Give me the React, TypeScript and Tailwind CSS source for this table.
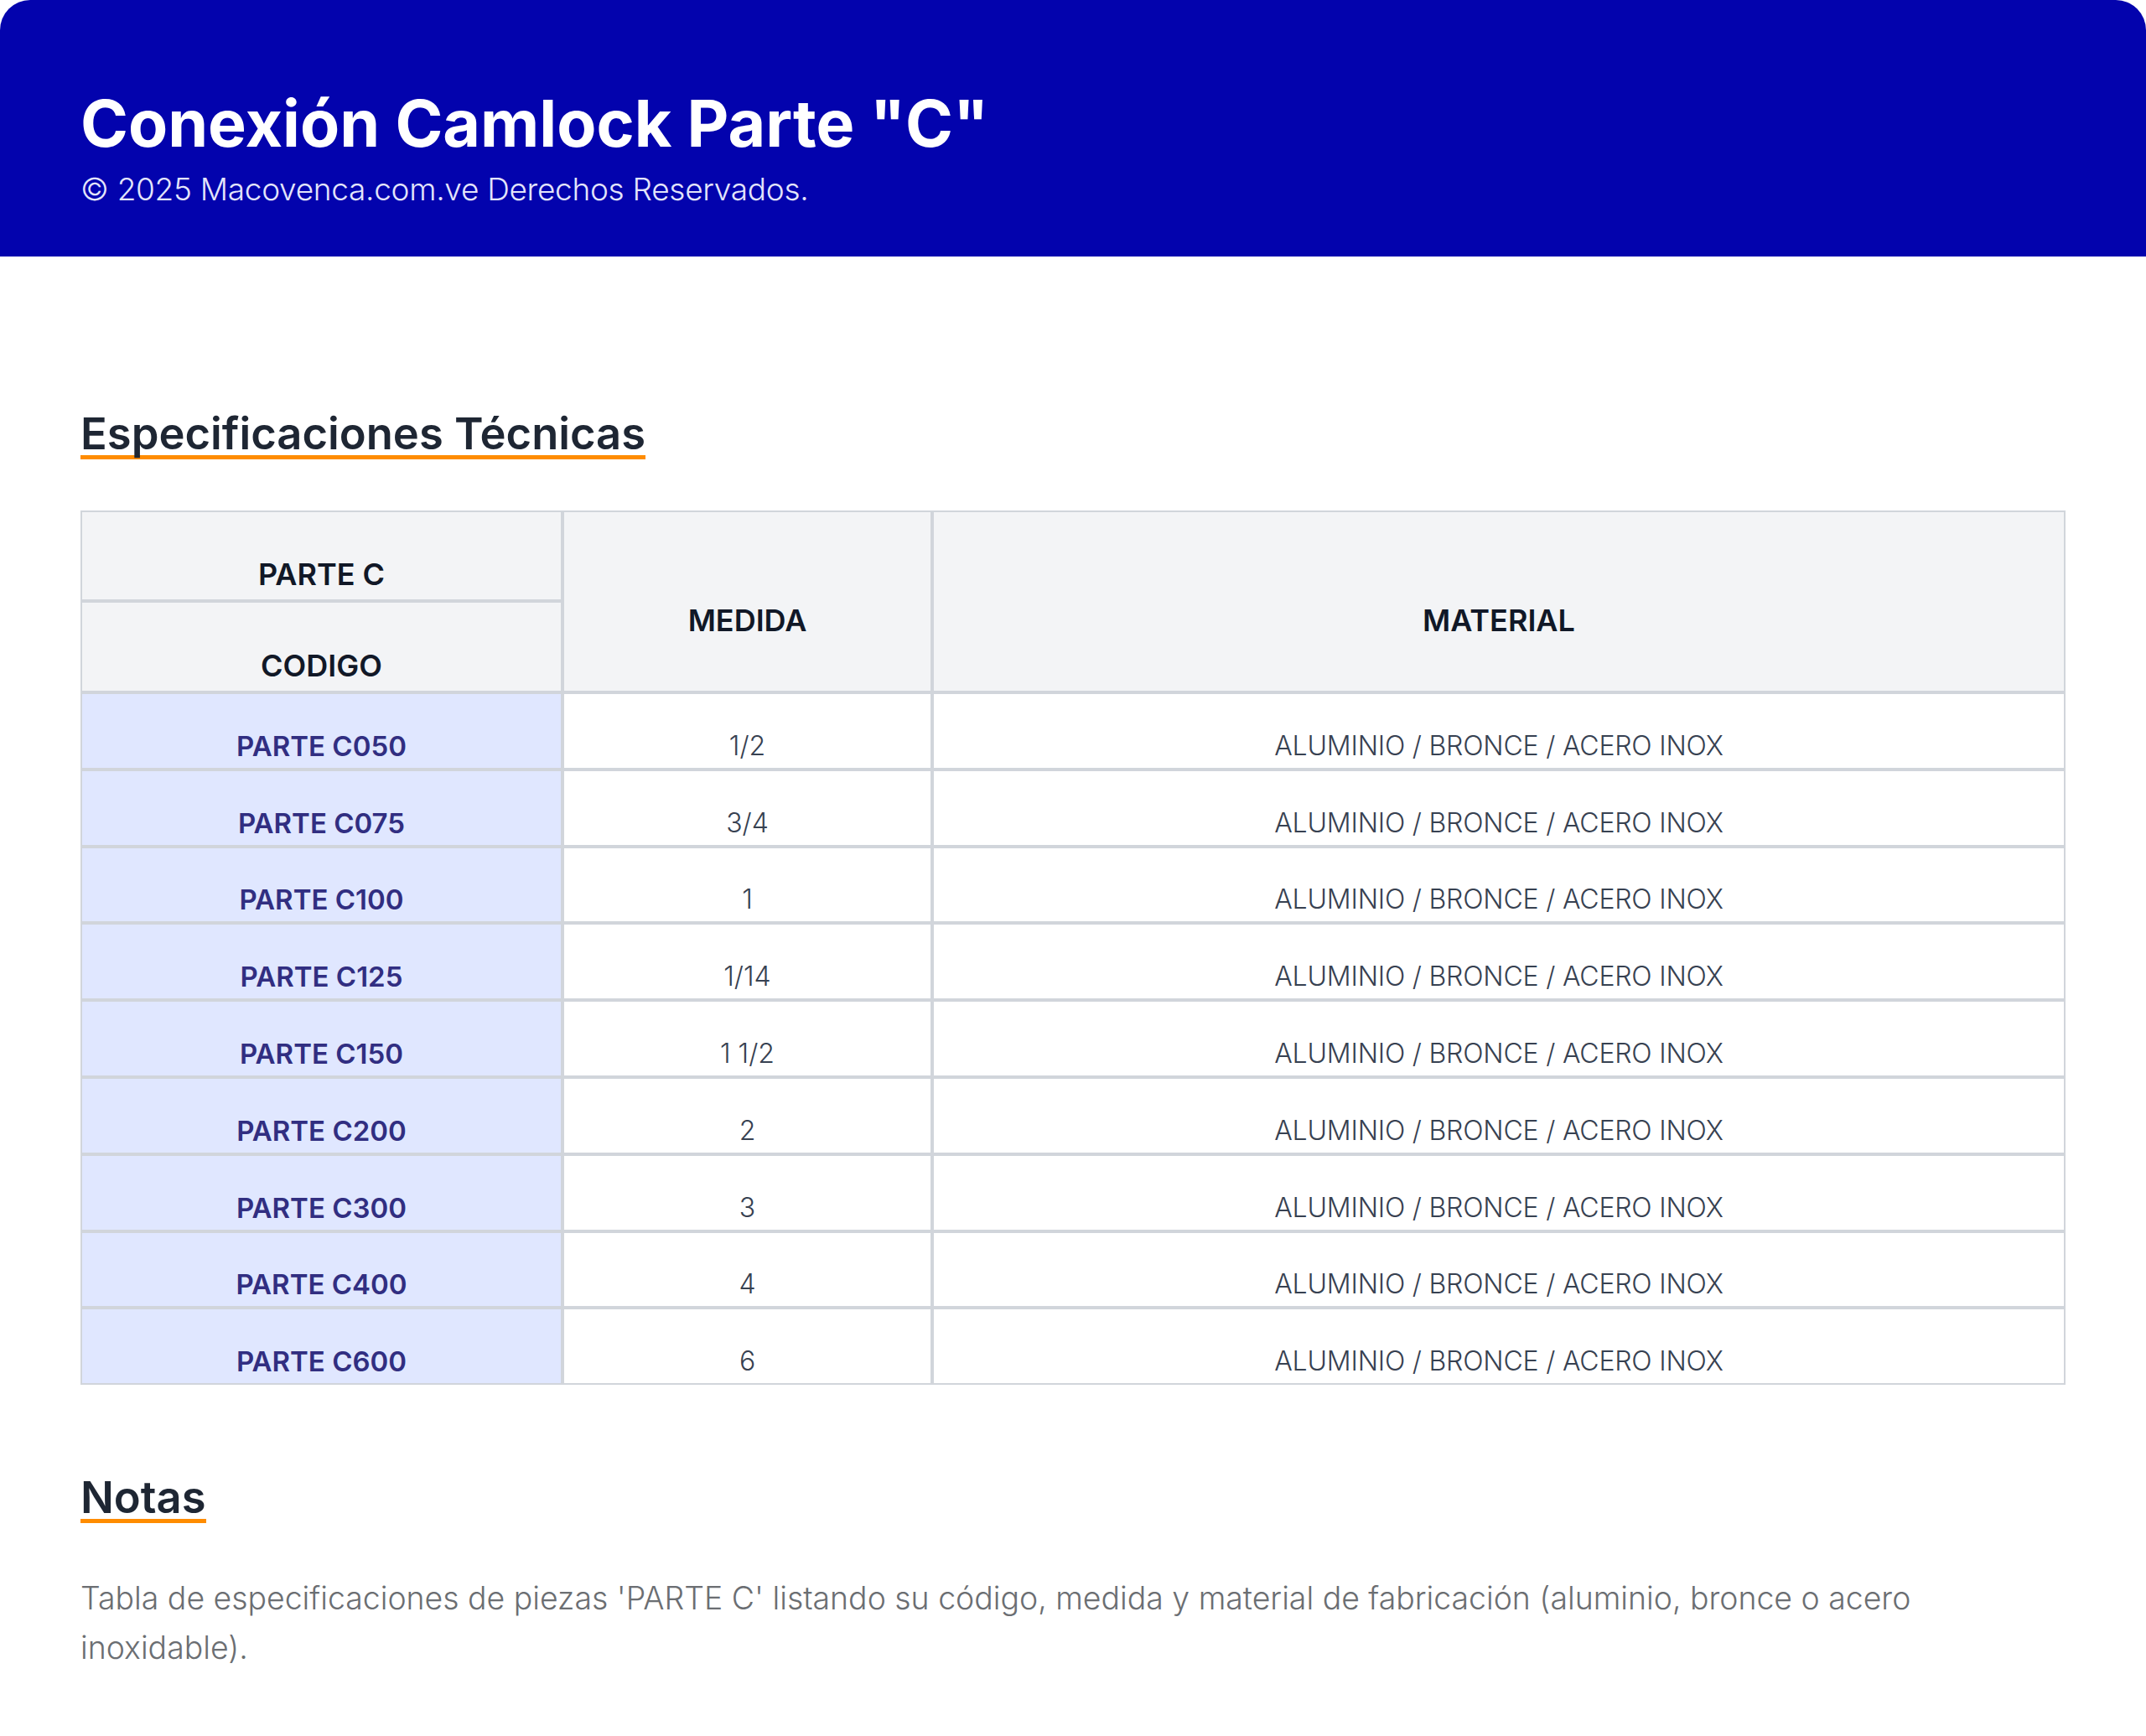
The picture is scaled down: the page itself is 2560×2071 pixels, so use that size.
const rows = [
  { code: 'PARTE C050', size: '1/2' },
  { code: 'PARTE C075', size: '3/4' },
  { code: 'PARTE C100', size: '1' },
  { code: 'PARTE C125', size: '1/14' },
  { code: 'PARTE C150', size: '1 1/2' },
  { code: 'PARTE C200', size: '2' },
  { code: 'PARTE C300', size: '3' },
  { code: 'PARTE C400', size: '4' },
  { code: 'PARTE C600', size: '6' },
];

const MATERIAL = 'ALUMINIO / BRONCE / ACERO INOX';

export default function App() {
  return (
    <div className="min-h-[2071px] bg-white font-['Inter',sans-serif]">
      {/* cabecera */}
      <header className="bg-[#0303ad] rounded-t-[36px] px-24 pt-[109px] pb-[58px]">
        <h1 className="text-[77px] leading-none font-bold text-white">
          Conexión Camlock Parte "C"
        </h1>
        <p className="mt-[18px] text-[37px] leading-[44px] font-light text-[#e3e5fb] tracking-[-0.3px]">
          © 2025 Macovenca.com.ve Derechos Reservados.
        </p>
      </header>

      <main className="px-24 pb-[79px]">
        <h2 className="mt-[185px] inline-block text-[52.5px] leading-[52px] font-semibold text-[#1e2633] border-b-[5px] border-[#ff8c00]">
          Especificaciones Técnicas
        </h2>

        <table className="mt-[61px] w-full table-fixed border-separate border-spacing-0 text-center">
          <colgroup>
            <col className="w-[575px]" />
            <col className="w-[441px]" />
            <col />
          </colgroup>
          <thead className="bg-[#f3f4f6] text-[#111827] text-[36px] font-semibold">
            <tr>
              <th className="border-2 border-[#d1d5db] pt-[52px] pb-[8px] leading-[44px] font-semibold">PARTE C</th>
              <th rowSpan={2} className="border-2 border-[#d1d5db] pt-[52px] pb-[8px] leading-[44px] font-semibold align-middle">MEDIDA</th>
              <th rowSpan={2} className="border-2 border-[#d1d5db] pt-[52px] pb-[8px] leading-[44px] font-semibold align-middle">MATERIAL</th>
            </tr>
            <tr>
              <th className="border-2 border-[#d1d5db] pt-[53px] pb-[8px] leading-[44px] font-semibold">CODIGO</th>
            </tr>
          </thead>
          <tbody className="text-[32px] leading-[48px]">
            {rows.map((r) => (
              <tr key={r.code}>
                <td className="border-2 border-[#d1d5db] bg-[#e0e7ff] pt-[37.8px] pb-[2px] text-[33px] font-semibold text-[#312e81]">{r.code}</td>
                <td className="border-2 border-[#d1d5db] pt-[37.8px] pb-[2px] font-light text-[#374151]">{r.size}</td>
                <td className="border-2 border-[#d1d5db] pt-[37.8px] pb-[2px] font-light text-[#374151] tracking-[-0.2px]">{MATERIAL}</td>
              </tr>
            ))}
          </tbody>
        </table>

        <h2 className="mt-[108px] inline-block text-[52.5px] leading-[52px] font-semibold text-[#1e2633] border-b-[5px] border-[#ff8c00]">
          Notas
        </h2>
        <p className="mt-[60px] text-[37.4px] leading-[59px] font-light text-[#6b6e72]">
          Tabla de especificaciones de piezas 'PARTE C' listando su código, medida y material de fabricación (aluminio, bronce o acero inoxidable).
        </p>
      </main>
    </div>
  );
}
